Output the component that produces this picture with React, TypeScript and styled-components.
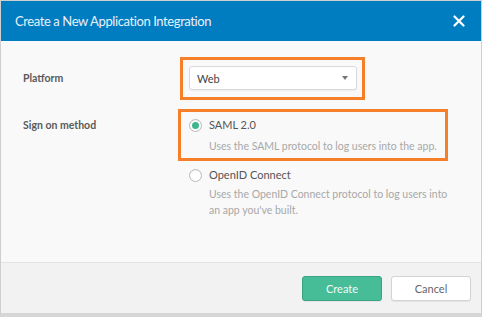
import styled, { createGlobalStyle } from "styled-components";

const GlobalStyle = createGlobalStyle`
  html, body {
    margin: 0;
    padding: 0;
    background: #ffffff;
  }
  * {
    box-sizing: border-box;
  }
`;

const Modal = styled.div`
  width: 482px;
  height: 317px;
  display: flex;
  flex-direction: column;
  border: 1px solid #cfcfcf;
  border-bottom: 4px solid #d6d6d6;
  background: #f9f9f9;
  font-family: Lato, "Liberation Sans", sans-serif;
`;

const Header = styled.div`
  height: 40px;
  flex-shrink: 0;
  display: flex;
  align-items: center;
  justify-content: space-between;
  padding: 0 14px 0 14px;
  background: #007cc1;
`;

const Title = styled.h1`
  margin: 0;
  font-size: 13px;
  font-weight: 400;
  letter-spacing: -0.4px;
  color: #e8f1f9;
`;

const CloseButton = styled.button`
  width: 16px;
  height: 16px;
  padding: 0;
  border: 0;
  background: transparent;
  display: flex;
  align-items: center;
  justify-content: center;
  cursor: pointer;
`;

const Body = styled.div`
  flex: 1;
  padding: 16px 22px 0 22px;
  display: flex;
  flex-direction: column;
  gap: 9px;
  border-bottom: 1px solid #e3e3e3;
`;

const Row = styled.div`
  display: grid;
  grid-template-columns: 155px 1fr;
  align-items: start;
`;

const Label = styled.div<{ $top: number }>`
  padding-top: ${(p) => p.$top}px;
  font-size: 10.5px;
  font-weight: 700;
  color: #5a5a5a;
  line-height: 16px;
`;

const Highlight = styled.div<{ $width: number; $offset: number }>`
  width: ${(p) => p.$width}px;
  margin-left: ${(p) => p.$offset}px;
  border: 3px solid #f6802a;
`;

const SelectBox = styled.div`
  margin: 6px 5px 7px 6px;
  height: 24px;
  display: flex;
  align-items: center;
  justify-content: space-between;
  padding: 0 8px 0 7px;
  background: #ffffff;
  border: 1px solid #d9d9d9;
  border-radius: 3px;
  box-shadow: 0 1px 1px rgba(0, 0, 0, 0.05);
  font-size: 11px;
  color: #444;
`;

const Caret = styled.span`
  width: 0;
  height: 0;
  border-left: 3.5px solid transparent;
  border-right: 3.5px solid transparent;
  border-top: 4px solid #777;
`;

const Options = styled.div`
  display: flex;
  flex-direction: column;
`;

const Option = styled.div<{ $pad: string }>`
  display: grid;
  grid-template-columns: 20px 1fr;
  padding: ${(p) => p.$pad};
`;

const Radio = styled.span<{ $checked?: boolean }>`
  width: 13px;
  height: 13px;
  margin-top: 1.5px;
  border-radius: 50%;
  border: 1px solid #b9b9b9;
  background: #fff;
  display: flex;
  align-items: center;
  justify-content: center;
  box-shadow: inset 0 1px 1px rgba(0, 0, 0, 0.06);

  &::after {
    content: "";
    width: 7px;
    height: 7px;
    border-radius: 50%;
    background: ${(p) => (p.$checked ? "#3fb58d" : "transparent")};
  }
`;

const OptionTitle = styled.div`
  font-size: 11px;
  line-height: 16px;
  color: #555;
`;

const OptionDesc = styled.div<{ $mt: number }>`
  grid-column: 2;
  margin-top: ${(p) => p.$mt}px;
  max-width: 240px;
  font-size: 10.5px;
  line-height: 16px;
  color: #a8a8a8;
`;

const Footer = styled.div`
  height: 50px;
  flex-shrink: 0;
  display: flex;
  align-items: center;
  justify-content: flex-end;
  gap: 9px;
  padding: 0 10px 0 0;
  background: #f2f2f2;
`;

const Button = styled.button<{ $primary?: boolean }>`
  width: 80px;
  height: 25px;
  border-radius: 3px;
  font-family: inherit;
  font-size: 11px;
  cursor: pointer;
  background: ${(p) => (p.$primary ? "#46bd97" : "#ffffff")};
  border: 1px solid ${(p) => (p.$primary ? "#3aa381" : "#d3d3d3")};
  color: ${(p) => (p.$primary ? "#f4fbf8" : "#666")};
  box-shadow: 0 1px 1px rgba(0, 0, 0, 0.06);
`;

export default function App() {
  return (
    <>
      <GlobalStyle />
      <Modal>
        <Header>
          <Title>Create a New Application Integration</Title>
          <CloseButton aria-label="Close">
            <svg width="12" height="12" viewBox="0 0 12 12">
              <path d="M1.5 1.5 L10.5 10.5 M10.5 1.5 L1.5 10.5" stroke="#fff" strokeWidth="2.2" strokeLinecap="round" />
            </svg>
          </CloseButton>
        </Header>
        <Body>
          <Row>
            <Label $top={13}>Platform</Label>
            <Highlight $width={185} $offset={2}>
              <SelectBox>
                <span>Web</span>
                <Caret />
              </SelectBox>
            </Highlight>
          </Row>
          <Row>
            <Label $top={8}>Sign on method</Label>
            <Options>
              <Highlight $width={270} $offset={0}>
                <Option $pad="5px 8px 4px 8px">
                  <Radio $checked />
                  <OptionTitle>SAML 2.0</OptionTitle>
                  <OptionDesc $mt={5}>Uses the SAML protocol to log users into the app.</OptionDesc>
                </Option>
              </Highlight>
              <Option $pad="6px 0 0 11px">
                <Radio />
                <OptionTitle>OpenID Connect</OptionTitle>
                <OptionDesc $mt={3}>Uses the OpenID Connect protocol to log users into an app you've built.</OptionDesc>
              </Option>
            </Options>
          </Row>
        </Body>
        <Footer>
          <Button $primary>Create</Button>
          <Button>Cancel</Button>
        </Footer>
      </Modal>
    </>
  );
}
